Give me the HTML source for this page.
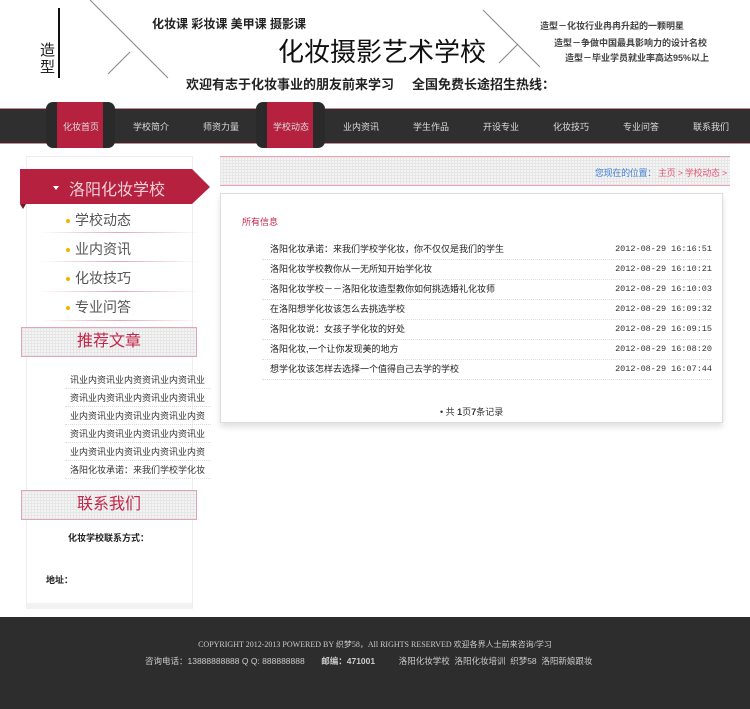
<!DOCTYPE html>
<html><head><meta charset="utf-8"><style>
*{margin:0;padding:0;box-sizing:border-box}
body{width:750px;height:709px;background:#fff;font-family:"Liberation Sans","Noto Sans CJK SC",sans-serif;position:relative;overflow:hidden;color:#333}
.a{position:absolute;white-space:nowrap}
.grid{background-color:#f4f4f4;background-image:linear-gradient(#e6e6e6 1px,transparent 1px),linear-gradient(90deg,#e6e6e6 1px,transparent 1px);background-size:3px 3px}
.nav{position:absolute;left:0;top:108px;width:750px;height:36px;background:#2f2f2f;border-top:1px solid #c98a95;border-bottom:1px solid #c98a95}
.ni{position:absolute;top:120px;font-size:9px;color:#ddd;width:70px;text-align:center}
.tab{position:absolute;top:102px;width:69px;height:46px;border-radius:7px;background:#2a2a2a}
.tab i{position:absolute;left:11px;top:0;width:46px;height:46px;background:#b5213f}
.mi{position:absolute;left:66px;font-size:14px;color:#555}
.mi b{display:inline-block;width:4px;height:4px;border-radius:2px;background:#f5b400;margin-right:5px;vertical-align:middle}
.sep{position:absolute;left:40px;width:160px;height:1px;background:linear-gradient(90deg,transparent,#e3a8b4,transparent)}
.rl{position:absolute;left:65px;width:146px;font-size:9px;color:#333;border-bottom:1px dotted #ddd;height:18px;line-height:18px;padding-left:5px;overflow:hidden}
.hb{position:absolute;left:21px;width:176px;height:30px;border:1px solid #e2a5b2;text-align:center;color:#c2264a;font-size:16px;line-height:28px}
.row{position:absolute;left:262px;width:450px;height:20px;border-bottom:1px dotted #ddd;font-size:9px;line-height:19px;color:#222}
.row span{position:absolute;left:8px}
.row em{position:absolute;right:0;font-style:normal;font-family:"Liberation Mono",monospace;font-size:8.5px;color:#333}
</style></head><body>
<div class="a" style="left:58px;top:8px;width:2px;height:70px;background:#111"></div>
<div class="a" style="left:40px;top:42px;font-size:15px;line-height:17px;color:#222;white-space:normal;width:16px">造型</div>
<svg class="a" style="left:0;top:0" width="750" height="100"><g stroke="#888" stroke-width="1"><line x1="90" y1="0" x2="168" y2="78"/><line x1="108" y1="74" x2="130" y2="52"/><line x1="483" y1="10" x2="540" y2="67"/><line x1="499" y1="63" x2="518" y2="44"/></g></svg>
<div class="a" style="left:152px;top:15px;font-size:12px;font-weight:bold;color:#222">化妆课 彩妆课 美甲课 摄影课</div>
<div class="a" style="left:278px;top:32px;font-size:26px;color:#111">化妆摄影艺术学校</div>
<div class="a" style="left:186px;top:74px;font-size:13px;font-weight:bold;color:#222">欢迎有志于化妆事业的朋友前来学习&nbsp;&nbsp;&nbsp;&nbsp;&nbsp;全国免费长途招生热线：</div>
<div class="a" style="left:540px;top:19px;font-size:9px;font-weight:bold;color:#444">造型－化妆行业冉冉升起的一颗明星</div>
<div class="a" style="left:554px;top:36px;font-size:9px;font-weight:bold;color:#444">造型－争做中国最具影响力的设计名校</div>
<div class="a" style="left:565px;top:51px;font-size:9px;font-weight:bold;color:#444">造型－毕业学员就业率高达95%以上</div>
<div class="nav"></div>
<div class="tab" style="left:46px"><i></i></div>
<div class="tab" style="left:256px"><i></i></div>
<div class="ni" style="left:46px">化妆首页</div><div class="ni" style="left:116px">学校简介</div><div class="ni" style="left:186px">师资力量</div><div class="ni" style="left:256px">学校动态</div><div class="ni" style="left:326px">业内资讯</div><div class="ni" style="left:396px">学生作品</div><div class="ni" style="left:466px">开设专业</div><div class="ni" style="left:536px">化妆技巧</div><div class="ni" style="left:606px">专业问答</div><div class="ni" style="left:676px">联系我们</div>
<div class="a" style="left:26px;top:156px;width:167px;height:453px;border:1px solid #eee;border-bottom:6px solid #f2f2f2"></div>
<svg class="a" style="left:20px;top:169px" width="192" height="40"><polygon points="0,0 172,0 190,18 172,35 0,35" fill="#b5213f"/><polygon points="0,35 6,35 3,40" fill="#7a1528"/><polygon points="33,17 39,17 36,21" fill="#fff"/></svg>
<div class="a" style="left:69px;top:176px;font-size:16px;color:#f1d0d8">洛阳化妆学校</div>
<div class="mi" style="top:210px"><b></b>学校动态</div><div class="sep" style="top:232px"></div>
<div class="mi" style="top:239px"><b></b>业内资讯</div><div class="sep" style="top:261px"></div>
<div class="mi" style="top:268px"><b></b>化妆技巧</div><div class="sep" style="top:291px"></div>
<div class="mi" style="top:297px"><b></b>专业问答</div><div class="sep" style="top:320px"></div>
<div class="hb grid" style="top:327px">推荐文章</div>
<div class="rl" style="top:371px">讯业内资讯业内资资讯业内资讯业</div>
<div class="rl" style="top:389px">资讯业内资讯业内资讯业内资讯业</div>
<div class="rl" style="top:407px">业内资讯业内资讯业内资讯业内资</div>
<div class="rl" style="top:425px">资讯业内资讯业内资讯业内资讯业</div>
<div class="rl" style="top:443px">业内资讯业内资讯业内资讯业内资</div>
<div class="rl" style="top:461px">洛阳化妆承诺：来我们学校学化妆</div>
<div class="hb grid" style="top:490px">联系我们</div>
<div class="a" style="left:68px;top:531px;font-size:9px;font-weight:bold;color:#222">化妆学校联系方式：</div>
<div class="a" style="left:46px;top:573px;font-size:9px;font-weight:bold;color:#222">地址：</div>
<div class="a grid" style="left:220px;top:156px;width:510px;height:30px;border-top:1px solid #eca3b1;border-bottom:1px solid #eca3b1"></div>
<div class="a" style="left:595px;top:166px;font-size:9px;letter-spacing:-0.3px;color:#3f7fd0">您现在的位置：<span style="color:#e05a78">&nbsp;主页 &gt; 学校动态 &gt;</span></div>
<div class="a" style="left:220px;top:193px;width:503px;height:230px;border:1px solid #ddd;box-shadow:0 4px 6px rgba(0,0,0,.12)"></div>
<div class="a" style="left:242px;top:215px;font-size:9px;color:#c2264a">所有信息</div>
<div class="row" style="top:240px"><span>洛阳化妆承诺：来我们学校学化妆，你不仅仅是我们的学生</span><em>2012-08-29 16:16:51</em></div>
<div class="row" style="top:260px"><span>洛阳化妆学校教你从一无所知开始学化妆</span><em>2012-08-29 16:10:21</em></div>
<div class="row" style="top:280px"><span>洛阳化妆学校－－洛阳化妆造型教你如何挑选婚礼化妆师</span><em>2012-08-29 16:10:03</em></div>
<div class="row" style="top:300px"><span>在洛阳想学化妆该怎么去挑选学校</span><em>2012-08-29 16:09:32</em></div>
<div class="row" style="top:320px"><span>洛阳化妆说：女孩子学化妆的好处</span><em>2012-08-29 16:09:15</em></div>
<div class="row" style="top:340px"><span>洛阳化妆,一个让你发现美的地方</span><em>2012-08-29 16:08:20</em></div>
<div class="row" style="top:360px"><span>想学化妆该怎样去选择一个值得自己去学的学校</span><em>2012-08-29 16:07:44</em></div>
<div class="a" style="left:440px;top:405px;font-size:9px;color:#333">• 共 <b>1</b>页<b>7</b>条记录</div>
<div class="a" style="left:0;top:617px;width:750px;height:92px;background:#2d2d2d"></div>
<div class="a" style="left:0;top:639px;width:750px;text-align:center;font-size:8px;color:#ccc;font-family:'Liberation Serif','Noto Sans CJK SC',serif">COPYRIGHT 2012-2013 POWERED BY 织梦58，All RIGHTS RESERVED 欢迎各界人士前来咨询/学习</div>
<div class="a" style="left:145px;top:655px;font-size:8.5px;color:#ccc">咨询电话：13888888888 Q Q: 888888888&nbsp;&nbsp;&nbsp;&nbsp;&nbsp;&nbsp; <b>邮编：471001</b>&nbsp;&nbsp;&nbsp;&nbsp;&nbsp;&nbsp;&nbsp;&nbsp;&nbsp; 洛阳化妆学校&nbsp; 洛阳化妆培训&nbsp; 织梦58&nbsp; 洛阳新娘跟妆</div>
</body></html>
